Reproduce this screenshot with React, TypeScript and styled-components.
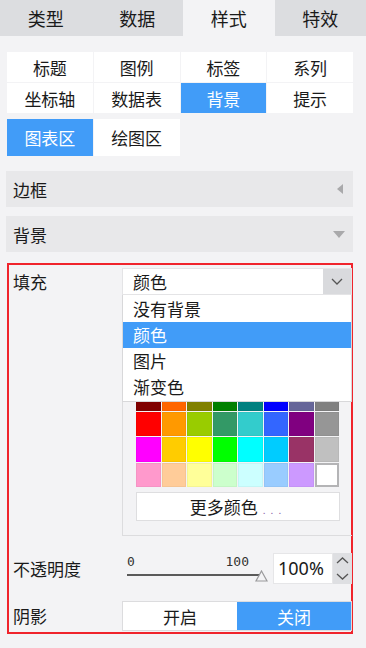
import React from "react";
import styled, { createGlobalStyle } from "styled-components";

const GlobalStyle = createGlobalStyle`
  html, body { margin: 0; padding: 0; background: #f3f3f5; }
  body { font-family: "Noto Sans CJK SC", "Noto Sans", sans-serif; color: #222; }
  * { box-sizing: border-box; }
`;

const BLUE = "#419cf8";

const Page = styled.div`
  width: 366px;
  height: 648px;
  background: #f3f3f5;
  overflow: hidden;
`;

const TabBar = styled.div`
  display: grid;
  grid-template-columns: repeat(4, 1fr);
  height: 36px;
`;

const Tab = styled.div<{ $active?: boolean }>`
  display: flex;
  align-items: center;
  justify-content: center;
  background: ${(p) => (p.$active ? "#f3f3f5" : "#dcdde0")};
  font-size: 18px;
  color: #1a1a1a;
`;

const SubGrid = styled.div<{ $row: number; $top: number }>`
  display: grid;
  grid-template-columns: repeat(4, 1fr);
  grid-auto-rows: ${(p) => p.$row}px;
  gap: 1px;
  margin: ${(p) => p.$top}px 13px 0 7px;
`;

const SubTab = styled.div<{ $active?: boolean }>`
  display: flex;
  align-items: center;
  justify-content: center;
  background: ${(p) => (p.$active ? BLUE : "#ffffff")};
  color: ${(p) => (p.$active ? "#ffffff" : "#1a1a1a")};
  font-size: 17px;
`;

const Sections = styled.div`
  display: flex;
  flex-direction: column;
  gap: 9px;
  margin: 15px 13px 0 6px;
`;

const SectionHeader = styled.div<{ $pad: number }>`
  height: 36px;
  background: #e8e8ea;
  display: flex;
  align-items: center;
  justify-content: space-between;
  padding: 0 ${(p) => p.$pad}px 0 7px;
  font-size: 17px;
  color: #1a1a1a;
`;

const RedBox = styled.div`
  margin: 11px 13px 0 7px;
  border: 2px solid #f0242c;
  padding: 3px 0 1px 4px;
  display: flex;
  flex-direction: column;
`;

const FieldRow = styled.div<{ $top?: number; $align?: string }>`
  display: grid;
  grid-template-columns: 109px 1fr;
  align-items: ${(p) => p.$align || "center"};
  margin-top: ${(p) => p.$top || 0}px;
`;

const Label = styled.div<{ $h?: number }>`
  font-size: 17px;
  color: #1a1a1a;
  height: ${(p) => p.$h || 30}px;
  line-height: ${(p) => p.$h || 30}px;
`;

const FillControl = styled.div`
  position: relative;
  display: flex;
  flex-direction: column;
  margin-right: -1px;
`;

const Select = styled.div`
  height: 27px;
  display: flex;
  background: #ffffff;
  border: 1px solid #e4e4e6;
`;

const SelectValue = styled.div`
  flex: 1;
  padding-left: 10px;
  font-size: 17px;
  line-height: 25px;
  color: #1a1a1a;
`;

const SelectButton = styled.div`
  width: 28px;
  background: #d9dadd;
  display: flex;
  align-items: center;
  justify-content: center;
`;

const Menu = styled.div`
  position: absolute;
  top: 27px;
  left: 0;
  right: 0;
  background: #ffffff;
  border: 1px solid #d8d8da;
  border-top: none;
  padding: 1px 0 1px;
  z-index: 2;
`;

const MenuItem = styled.div<{ $active?: boolean }>`
  height: 26px;
  line-height: 26px;
  padding-left: 10px;
  font-size: 17px;
  background: ${(p) => (p.$active ? BLUE : "transparent")};
  color: ${(p) => (p.$active ? "#ffffff" : "#1a1a1a")};
`;

const PalettePanel = styled.div`
  border-left: 1px solid #dcdcde;
  border-bottom: 1px solid #dcdcde;
  padding: 91px 0 14px 13px;
  display: flex;
  flex-direction: column;
  gap: 5px;
`;

const Swatches = styled.div`
  display: grid;
  grid-template-columns: repeat(8, 24.5px);
  grid-auto-rows: 24.5px;
  gap: 1px;
`;

const Swatch = styled.div<{ $c: string; $framed?: boolean }>`
  background: ${(p) => p.$c};
  border: ${(p) => (p.$framed ? "2px solid #b4b4b6" : "1px solid rgba(0,0,0,0.04)")};
`;

const MoreButton = styled.div`
  width: 204px;
  height: 29px;
  background: #ffffff;
  border: 1px solid #dedee0;
  display: flex;
  align-items: center;
  justify-content: center;
  font-size: 17px;
  color: #1a1a1a;
`;

const Dots = styled.span`
  font-size: 10px;
  color: #8b63a8;
  letter-spacing: 5px;
  margin-left: 5px;
  padding-top: 6px;
`;

const OpacityControl = styled.div`
  display: flex;
  align-items: stretch;
  height: 31px;
  margin-right: -1px;
`;

const Slider = styled.div`
  position: relative;
  width: 151px;
  padding-left: 5px;
  display: flex;
  flex-direction: column;
`;

const Scale = styled.div`
  width: 122px;
  display: flex;
  justify-content: space-between;
  margin-top: 2px;
  font-family: "DejaVu Sans Mono", "Liberation Mono", monospace;
  font-size: 13px;
  line-height: 14px;
  color: #333;
`;

const Track = styled.div`
  width: 134px;
  height: 2px;
  margin-top: 5px;
  background: #5a5a5a;
`;

const Thumb = styled.svg`
  position: absolute;
  left: 133px;
  top: 17px;
`;

const NumberBox = styled.div`
  width: 60px;
  background: #ffffff;
  border: 1px solid #e6e6e8;
  font-family: "Noto Sans", "Liberation Sans", sans-serif;
  font-size: 18px;
  line-height: 29px;
  padding-left: 4px;
  color: #1a1a1a;
`;

const Spinner = styled.div`
  width: 19px;
  background: #dedfe2;
  display: flex;
  flex-direction: column;
  align-items: center;
  justify-content: center;
  gap: 9px;
`;

const Toggle = styled.div`
  display: grid;
  grid-template-columns: 1fr 1fr;
  height: 30px;
  border: 1px solid #dcdcde;
  margin-right: -1px;
`;

const ToggleOption = styled.div<{ $active?: boolean }>`
  display: flex;
  align-items: center;
  justify-content: center;
  font-size: 17px;
  background: ${(p) => (p.$active ? BLUE : "#ffffff")};
  color: ${(p) => (p.$active ? "#ffffff" : "#1a1a1a")};
`;

const Chevron = ({ up = false, w = 12, h = 7 }: { up?: boolean; w?: number; h?: number }) => (
  <svg width={w} height={h} viewBox={`0 0 ${w} ${h}`}>
    <polyline
      points={up ? `1,${h - 1} ${w / 2},1 ${w - 1},${h - 1}` : `1,1 ${w / 2},${h - 1} ${w - 1},1`}
      fill="none"
      stroke="#555"
      strokeWidth="1.3"
    />
  </svg>
);

const colors = [
  ["#800000", "#ff6600", "#808000", "#008000", "#008080", "#0000ff", "#666699", "#808080"],
  ["#ff0000", "#ff9900", "#99cc00", "#339966", "#33cccc", "#3366ff", "#800080", "#969696"],
  ["#ff00ff", "#ffcc00", "#ffff00", "#00ff00", "#00ffff", "#00ccff", "#993366", "#c0c0c0"],
  ["#ff99cc", "#ffcc99", "#ffff99", "#ccffcc", "#ccffff", "#99ccff", "#cc99ff", "#ffffff"],
];

export default function App() {
  return (
    <Page>
      <GlobalStyle />
      <TabBar>
        <Tab>类型</Tab>
        <Tab>数据</Tab>
        <Tab $active>样式</Tab>
        <Tab>特效</Tab>
      </TabBar>

      <SubGrid $row={30} $top={16}>
        <SubTab>标题</SubTab>
        <SubTab>图例</SubTab>
        <SubTab>标签</SubTab>
        <SubTab>系列</SubTab>
        <SubTab>坐标轴</SubTab>
        <SubTab>数据表</SubTab>
        <SubTab $active>背景</SubTab>
        <SubTab>提示</SubTab>
      </SubGrid>
      <SubGrid $row={37} $top={6}>
        <SubTab $active>图表区</SubTab>
        <SubTab>绘图区</SubTab>
      </SubGrid>

      <Sections>
        <SectionHeader $pad={10}>
          边框
          <svg width="6" height="10" viewBox="0 0 6 10">
            <polygon points="6,0 6,10 0,5" fill="#a9a9ab" />
          </svg>
        </SectionHeader>
        <SectionHeader $pad={8}>
          背景
          <svg width="12" height="7" viewBox="0 0 12 7">
            <polygon points="0,0 12,0 6,7" fill="#a9a9ab" />
          </svg>
        </SectionHeader>
      </Sections>

      <RedBox>
        <FieldRow $align="start">
          <Label $h={27}>填充</Label>
          <FillControl>
            <Select>
              <SelectValue>颜色</SelectValue>
              <SelectButton>
                <Chevron />
              </SelectButton>
            </Select>
            <Menu>
              <MenuItem>没有背景</MenuItem>
              <MenuItem $active>颜色</MenuItem>
              <MenuItem>图片</MenuItem>
              <MenuItem>渐变色</MenuItem>
            </Menu>
            <PalettePanel>
              <Swatches>
                {colors.flat().map((c, i) => (
                  <Swatch key={i} $c={c} $framed={c === "#ffffff"} />
                ))}
              </Swatches>
              <MoreButton>
                更多颜色<Dots>...</Dots>
              </MoreButton>
            </PalettePanel>
          </FillControl>
        </FieldRow>

        <FieldRow $top={17}>
          <Label $h={31}>不透明度</Label>
          <OpacityControl>
            <Slider>
              <Scale>
                <span>0</span>
                <span>100</span>
              </Scale>
              <Track />
              <Thumb width="13" height="12" viewBox="0 0 13 12">
                <polygon points="6.5,1 12,11 1,11" fill="#f3f3f5" stroke="#9a9a9c" strokeWidth="1.2" />
              </Thumb>
            </Slider>
            <NumberBox>100%</NumberBox>
            <Spinner>
              <Chevron up w={13} h={7} />
              <Chevron w={13} h={7} />
            </Spinner>
          </OpacityControl>
        </FieldRow>

        <FieldRow $top={17}>
          <Label $h={30}>阴影</Label>
          <Toggle>
            <ToggleOption>开启</ToggleOption>
            <ToggleOption $active>关闭</ToggleOption>
          </Toggle>
        </FieldRow>
      </RedBox>
    </Page>
  );
}
